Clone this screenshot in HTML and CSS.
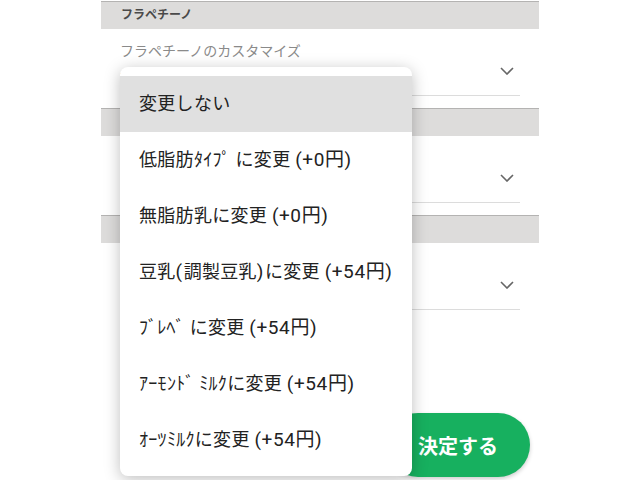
FILE: index.html
```html
<!DOCTYPE html>
<html lang="ja">
<head>
<meta charset="utf-8">
<link rel="stylesheet" href="styles.css">
</head>
<body>
<div class="page">
  <section class="group">
    <div class="group-head">フラペチーノ</div>
    <div class="field">
      <div class="field-label">フラペチーノのカスタマイズ</div>
      <div class="field-select"><span class="value">変更しない</span><svg class="chev" viewBox="0 0 14 8" width="14" height="8"><path d="M1 1 L7 7 L13 1" fill="none" stroke="#666" stroke-width="1.6"/></svg></div>
    </div>
  </section>
  <section class="group">
    <div class="group-head">ミルク</div>
    <div class="field">
      <div class="field-label">ミルクのカスタマイズ</div>
      <div class="field-select"><span class="value">変更しない</span><svg class="chev" viewBox="0 0 14 8" width="14" height="8"><path d="M1 1 L7 7 L13 1" fill="none" stroke="#666" stroke-width="1.6"/></svg></div>
    </div>
  </section>
  <section class="group">
    <div class="group-head">シロップ</div>
    <div class="field">
      <div class="field-label">シロップのカスタマイズ</div>
      <div class="field-select"><span class="value">変更しない</span><svg class="chev" viewBox="0 0 14 8" width="14" height="8"><path d="M1 1 L7 7 L13 1" fill="none" stroke="#666" stroke-width="1.6"/></svg></div>
    </div>
  </section>

  <button class="submit">決定する</button>

  <ul class="menu">
    <li class="menu-item selected">変更しない</li>
    <li class="menu-item">低脂肪ﾀｲﾌﾟ に変更 <span class="price">(+0円)</span></li>
    <li class="menu-item">無脂肪乳に変更 <span class="price">(+0円)</span></li>
    <li class="menu-item">豆乳<span class="paren">(</span>調製豆乳<span class="paren">)</span>に変更 <span class="price">(+54円)</span></li>
    <li class="menu-item">ﾌﾞﾚﾍﾞ に変更 <span class="price">(+54円)</span></li>
    <li class="menu-item">ｱｰﾓﾝﾄﾞ ﾐﾙｸに変更 <span class="price">(+54円)</span></li>
    <li class="menu-item">ｵｰﾂﾐﾙｸに変更 <span class="price">(+54円)</span></li>
  </ul>
</div>
</body>
</html>
```

FILE: styles.css
```css
* { box-sizing: border-box; }
html, body {
  margin: 0;
  padding: 0;
  background: #ffffff;
  font-family: Roboto, "Noto Sans CJK JP", sans-serif;
}
.page {
  position: relative;
  width: 438px;
  height: 480px;
  margin: 0 auto;
  padding-top: 1px;
}
.group-head {
  height: 28px;
  border-top: 1px solid #b4b3b2;
  background: #dddcdb;
  color: #4a4a4a;
  font-size: 12px;
  font-weight: 700;
  line-height: 26px;
  padding-left: 20px;
}
.field {
  height: 79px;
  padding: 12px 19px 0;
}
.field-label {
  font-size: 14px;
  line-height: 20px;
  color: #8a8a8a;
}
.field-select {
  display: flex;
  align-items: center;
  justify-content: space-between;
  height: 35px;
  border-bottom: 1px solid #dcdcdc;
  padding-right: 6px;
}
.value {
  font-size: 16px;
  color: #222;
}
.chev { display: block; margin-top: -14px; }
.submit {
  position: absolute;
  left: 285px;
  top: 413px;
  width: 144px;
  height: 64px;
  border: none;
  border-radius: 32px;
  background: #17b05f;
  color: #fff;
  font-family: "Noto Sans CJK JP", sans-serif;
  font-size: 20px;
  font-weight: 700;
  box-shadow: 0 2px 4px rgba(0,0,0,0.2);
  padding: 0;
}
.menu {
  position: absolute;
  left: 19px;
  top: 67px;
  width: 292px;
  margin: 0;
  padding: 9px 0 8px;
  list-style: none;
  background: #fff;
  border-radius: 8px;
  box-shadow: 0 3px 16px rgba(0,0,0,0.26);
}
.menu-item {
  height: 56px;
  line-height: 56px;
  padding-left: 19px;
  font-size: 18px;
  letter-spacing: 0.3px;
  color: #222;
  white-space: nowrap;
}
.menu-item.selected { background: #e0e0e0; }
.price {
  font-size: 19px;
  letter-spacing: 0.6px;
}
.paren {
  font-size: 19px;
  letter-spacing: 1.5px;
}
```
